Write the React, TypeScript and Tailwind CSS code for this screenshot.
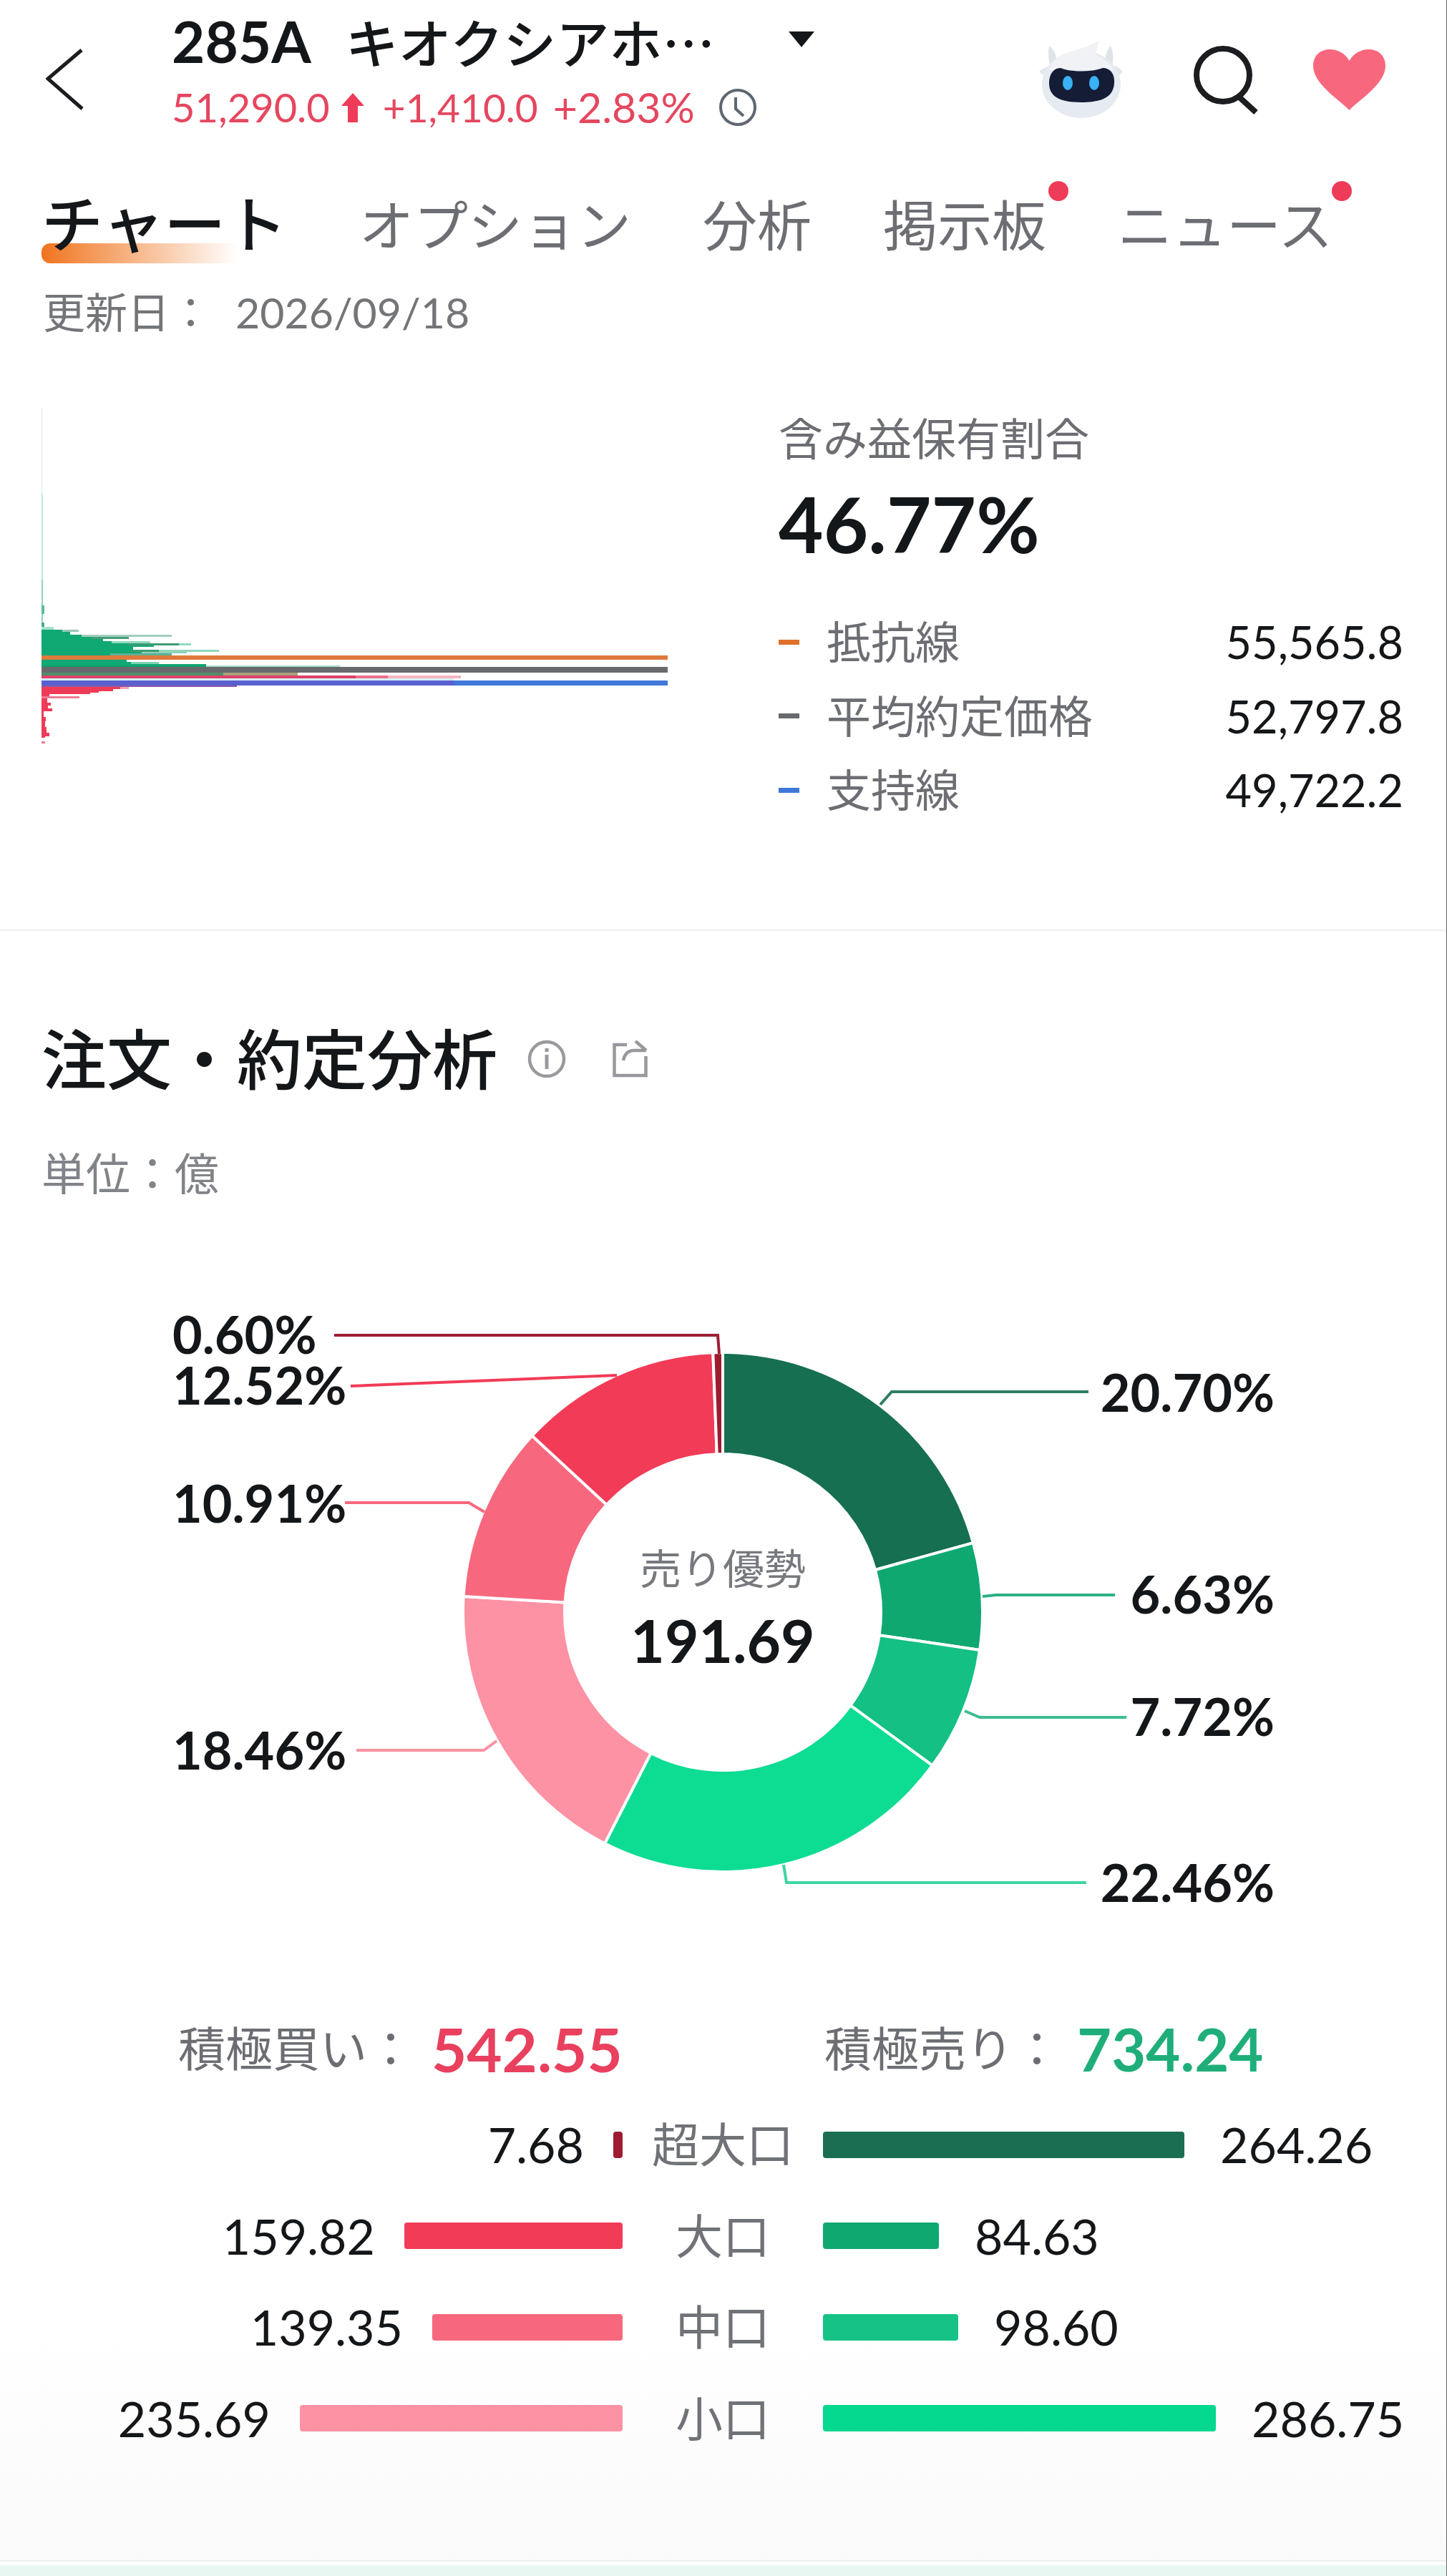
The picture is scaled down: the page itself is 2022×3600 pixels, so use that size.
const GREEN = "#10a873";
const RED = "#ee3b58";

// [y, height, width, fill] painted back to front
const upperBars: [number, number, number, string][] = [
  [0, 120, 1, "#d5f0e6"],
  [120, 120, 2, "#c0e8d9"],
  [240, 60, 2, "#8fd3ba"],
  [276, 12, 4, "#5dbb99"],
  [300, 6, 4, "#4aa98a"],
  [306, 4, 17, "#a5e2cc"],
  [310, 3, 52, "#9cc7b8"],
  [310, 3, 29, GREEN],
  [313, 4, 40, GREEN],
  [317, 3, 182, "#a3cfbf"],
  [317, 3, 56, GREEN],
  [320, 3, 122, "#4a9a7c"],
  [320, 3, 70, GREEN],
  [323, 3, 86, GREEN],
  [326, 3, 152, "#8fdcc0"],
  [326, 3, 98, GREEN],
  [329, 3, 209, "#8fdcc0"],
  [329, 3, 192, "#3d9c78"],
  [329, 3, 120, GREEN],
  [332, 2, 157, GREEN],
  [334, 4, 128, GREEN],
  [338, 3, 248, "#92d6bd"],
  [338, 3, 164, "#3d9c78"],
  [338, 3, 125, GREEN],
  [341, 2, 203, "#8dd0b8"],
  [341, 2, 140, GREEN],
  [343, 3, 182, "#5fb094"],
  [343, 3, 96, GREEN],
  [352, 3, 119, GREEN],
  [355, 3, 164, "#7fd3b4"],
  [355, 3, 125, GREEN],
  [358, 2, 230, GREEN],
  [360, 2, 417, "#a9dcc9"],
  [360, 2, 230, "#0fa06c"],
  [370, 4, 358, "#a7a27c"],
  [370, 4, 254, "#4f8f6a"],
  [374, 4, 586, "#f7b4c2"],
  [374, 4, 484, "#ef6f8c"],
  [374, 4, 439, "#e0406a"],
  [378, 3, 576, "#d6f1f5"],
];

const lowerBars: [number, number, number, string][] = [
  [388, 2, 273, "#8a5aa8"],
  [390, 3, 122, "#f3a7b6"],
  [390, 3, 110, RED],
  [393, 3, 100, RED],
  [396, 2, 80, RED],
  [398, 2, 68, RED],
  [400, 3, 11, RED],
  [403, 3, 53, "#ef7d92"],
  [406, 6, 8, RED],
  [412, 4, 13, RED],
  [416, 4, 9, RED],
  [420, 4, 15, RED],
  [424, 8, 3, RED],
  [432, 6, 6, RED],
  [438, 8, 5, RED],
  [446, 8, 7, RED],
  [454, 5, 11, RED],
  [459, 2, 5, RED],
  [466, 3, 5, "#f07f93"],
];

function VolumeProfile() {
  return (
    <svg width="875" height="485" viewBox="0 0 875 485" className="shrink-0">
      {upperBars.map(([y, h, w, fill], i) => (
        <rect key={i} x="0" y={y} width={w} height={h} fill={fill} />
      ))}
      <rect x="0" y="346" width="875" height="6" fill="#df7a3c" />
      <rect x="0" y="362" width="875" height="8" fill="#68696d" />
      <rect x="0" y="381" width="875" height="7" fill="#3f78d8" />
      <rect x="0" y="381" width="576" height="7" fill="#5a60d0" />
      {lowerBars.map(([y, h, w, fill], i) => (
        <rect key={i} x="0" y={y} width={w} height={h} fill={fill} />
      ))}
    </svg>
  );
}

const segments = [
  { pct: 20.7, fill: "#156f50" },
  { pct: 6.63, fill: "#0fa871" },
  { pct: 7.72, fill: "#14c084" },
  { pct: 22.46, fill: "#0ddc93" },
  { pct: 18.46, fill: "#fd92a4" },
  { pct: 10.91, fill: "#f7687f" },
  { pct: 12.52, fill: "#f23b57" },
  { pct: 0.6, fill: "#9e1c30" },
];

const leaders = [
  { points: "467,1866 1003,1866 1005,1892", stroke: "#9c1f35" },
  { points: "490,1937 862,1922", stroke: "#f23b57" },
  { points: "482,2100 655,2100 677,2113", stroke: "#f7687f" },
  { points: "498,2446 676,2446 694,2433", stroke: "#fb92a3" },
  { points: "1230,1963 1246,1945 1521,1945", stroke: "#2f7d62" },
  { points: "1373,2231 1392,2229 1558,2229", stroke: "#2bb083" },
  { points: "1348,2391 1369,2400 1574,2400", stroke: "#3cbd90" },
  { points: "1095,2606 1099,2631 1518,2631", stroke: "#3ed5a0" },
];

const leftLabels = [
  { text: "0.60%", y: 1892 },
  { text: "12.52%", y: 1963 },
  { text: "10.91%", y: 2128 },
  { text: "18.46%", y: 2473 },
];

const rightLabels = [
  { text: "20.70%", y: 1973 },
  { text: "6.63%", y: 2255 },
  { text: "7.72%", y: 2426 },
  { text: "22.46%", y: 2658 },
];

function arcPath(start: number, end: number) {
  const cx = 1010;
  const cy = 2253;
  const outer = 363;
  const inner = 221;
  const toXY = (r: number, deg: number) => {
    const rad = (deg * Math.PI) / 180;
    return `${cx + r * Math.sin(rad)} ${cy - r * Math.cos(rad)}`;
  };
  const large = end - start > 180 ? 1 : 0;
  return `M${toXY(outer, start)} A${outer} ${outer} 0 ${large} 1 ${toXY(outer, end)} L${toXY(inner, end)} A${inner} ${inner} 0 ${large} 0 ${toXY(inner, start)} Z`;
}

function Donut() {
  let acc = 0;
  return (
    <div className="relative mt-[105px] h-[900px]">
      <svg width="2021" height="900" viewBox="0 1780 2021 900">
        {segments.map((s) => {
          const start = acc;
          acc += s.pct * 3.6;
          return (
            <path
              key={s.fill}
              d={arcPath(start, acc)}
              fill={s.fill}
              stroke="#ffffff"
              strokeWidth="4"
            />
          );
        })}
        {leaders.map((l) => (
          <polyline key={l.points} points={l.points} fill="none" stroke={l.stroke} strokeWidth="4" />
        ))}
        {leftLabels.map((l) => (
          <text key={l.text} x="241" y={l.y} className="fill-[#14171a] text-[72px] font-bold">
            {l.text}
          </text>
        ))}
        {rightLabels.map((l) => (
          <text
            key={l.text}
            x="1781"
            y={l.y}
            textAnchor="end"
            className="fill-[#14171a] text-[72px] font-bold"
          >
            {l.text}
          </text>
        ))}
      </svg>
      <div className="absolute left-[810px] top-[372px] flex w-[400px] flex-col items-center">
        <span className="h-[80px] text-[58px] leading-[80px] text-[#76797e]">売り優勢</span>
        <span className="mt-[10px] h-[100px] text-[82px] font-bold leading-[100px] text-[#14171a]">
          191.69
        </span>
      </div>
    </div>
  );
}

const flowRows = [
  { label: "超大口", buy: "7.68", buyW: "w-[13px]", buyC: "bg-[#9e1c30]", sell: "264.26", sellW: "w-[505px]", sellC: "bg-[#1b6e51]" },
  { label: "大口", buy: "159.82", buyW: "w-[305px]", buyC: "bg-[#f23b57]", sell: "84.63", sellW: "w-[162px]", sellC: "bg-[#0fa871]" },
  { label: "中口", buy: "139.35", buyW: "w-[266px]", buyC: "bg-[#f7687f]", sell: "98.60", sellW: "w-[189px]", sellC: "bg-[#17c286]" },
  { label: "小口", buy: "235.69", buyW: "w-[451px]", buyC: "bg-[#fd92a4]", sell: "286.75", sellW: "w-[549px]", sellC: "bg-[#05d98f]" },
];

const legend = [
  { label: "抵抗線", value: "55,565.8", color: "bg-[#e0702a]" },
  { label: "平均約定価格", value: "52,797.8", color: "bg-[#68696d]" },
  { label: "支持線", value: "49,722.2", color: "bg-[#3f78d8]" },
];

function Robot() {
  return (
    <svg width="150" height="130" viewBox="0 0 150 130" className="-my-[18px] -mx-[17px] shrink-0">
      <path d="M28 24 C36 30 40 40 38 52 L30 54 C27 44 26 32 28 24Z" fill="#dfe4ea" />
      <path d="M114 24 C118 32 118 44 116 54 L106 50 C106 40 108 30 114 24Z" fill="#dfe4ea" />
      <path d="M14 60 C22 54 30 50 40 50 L30 70 C24 68 18 64 14 60Z" fill="#e3e7ec" />
      <path d="M131 60 C124 52 116 50 106 50 L118 70 C124 68 128 64 131 60Z" fill="#e3e7ec" />
      <ellipse cx="73" cy="78" rx="55" ry="47" fill="#e6ebf1" />
      <path d="M44 38 C58 30 80 28 97 17 C96 26 94 32 92 36 C106 42 114 50 118 58 L28 58 C30 50 36 42 44 38Z" fill="#f0f2f5" />
      <path d="M44 55 C58 61 88 61 103 55 C114 55 120 64 119 76 C118 92 108 103 73 103 C38 103 28 92 28 76 C28 64 34 55 44 55Z" fill="#141c36" />
      <ellipse cx="54" cy="76" rx="7" ry="10" fill="#3ab0f5" />
      <ellipse cx="91" cy="76" rx="7" ry="10" fill="#3ab0f5" />
    </svg>
  );
}

export default function App() {
  return (
    <div className="flex h-[3600px] w-[2022px] flex-col overflow-hidden border-r border-[#666] bg-[linear-gradient(to_bottom,#ffffff_0,#ffffff_3250px,#fafafa_3578px)] font-['Lato','Noto_Sans_CJK_JP',sans-serif] text-[#14171a]">
      {/* top bar */}
      <div className="flex h-[200px] items-start pl-[64px] pr-[85px]">
        <svg width="54" height="86" viewBox="0 0 54 86" className="mt-[68px] shrink-0">
          <polyline points="50,2 3,42 51,84" fill="none" stroke="#1b1d20" strokeWidth="5" />
        </svg>
        <div className="ml-[122px] flex flex-col">
          <div className="mt-[17px] flex h-[80px] items-center">
            <span className="text-[80px] font-bold leading-[80px]">285A</span>
            <span className="ml-[48px] font-['Noto_Sans_CJK_JP',sans-serif] text-[74px] font-medium leading-[80px]">
              キオクシアホ…
            </span>
            <svg width="36" height="22" viewBox="0 0 36 22" className="ml-[103px] -translate-y-[2px]">
              <polygon points="0,0 36,0 18,22" fill="#14171a" />
            </svg>
          </div>
          <div className="mt-[18px] flex h-[70px] items-center text-[56px] leading-[70px] text-[#e5475f]">
            <span>51,290.0</span>
            <svg width="32" height="41" viewBox="0 0 32 41" className="ml-[16px]">
              <polygon points="16,0 32,18 23,18 23,41 9,41 9,18 0,18" fill="#ef3b57" />
            </svg>
            <span className="ml-[26px] text-[55px]">+1,410.0</span>
            <span className="ml-[21px] text-[59px]">+2.83%</span>
            <svg width="54" height="54" viewBox="0 0 54 54" className="ml-[33px]">
              <circle cx="27" cy="27" r="24" fill="none" stroke="#5f6770" strokeWidth="4" />
              <polyline points="24,13 24,29 35,39" fill="none" stroke="#5f6770" strokeWidth="4" />
            </svg>
          </div>
        </div>
        <div className="ml-auto mt-[58px] flex items-start">
          <Robot />
          <svg width="90" height="96" viewBox="0 0 90 96" className="ml-[97px] mt-[6px]">
            <ellipse cx="41" cy="41" rx="37" ry="37" fill="none" stroke="#1b1d20" strokeWidth="8" />
            <line x1="64" y1="72" x2="87" y2="93" stroke="#1b1d20" strokeWidth="8" />
          </svg>
          <svg width="101" height="85" viewBox="0 0 101 85" className="ml-[77px] mt-[11px]">
            <path
              d="M50.5 85 C36 70 0 48 0 23 C0 9 10 0 23 0 C35 0 45 6 50.5 16 C56 6 66 0 78 0 C91 0 101 9 101 23 C101 48 65 70 50.5 85Z"
              fill="#f7687f"
            />
          </svg>
        </div>
      </div>

      {/* tabs */}
      <div className="mt-[70px] flex h-[90px] items-center gap-[100px] pl-[58px] text-[76px] leading-[90px] text-[#6c6e73]">
        <div className="relative w-[344px] font-medium">
          <div className="absolute left-[0px] top-[72px] h-[28px] w-[274px] rounded-l-[12px] bg-gradient-to-r from-[#f0751f] to-transparent" />
          <span className="relative text-[86px] text-[#14171a]">チャート</span>
        </div>
        <span>オプション</span>
        <span>分析</span>
        <div className="relative">
          <span>掲示板</span>
          <div className="absolute left-[231px] top-[-17px] h-[28px] w-[28px] rounded-full bg-[#ee3b58]" />
        </div>
        <div className="relative">
          <span>ニュース</span>
          <div className="absolute left-[299px] top-[-17px] h-[28px] w-[28px] rounded-full bg-[#ee3b58]" />
        </div>
      </div>

      <div className="mt-[42px] flex h-[70px] items-center pl-[60px] text-[59px] leading-[70px] text-[#737579]">
        <span>更新日：</span>
        <span className="ml-[33px]">2026/09/18</span>
      </div>

      {/* cost distribution */}
      <div className="mt-[98px] flex h-[729px] pl-[58px] pr-[60px]">
        <VolumeProfile />
        <div className="ml-[155px] flex flex-1 flex-col">
          <span className="mt-[8px] h-[70px] text-[62px] leading-[70px] text-[#6c6e73]">含み益保有割合</span>
          <span className="mt-[23px] h-[120px] text-[108px] font-bold leading-[120px]">46.77%</span>
          <div className="mt-[71px] flex flex-col gap-[33.5px]">
            {legend.map((row) => (
              <div key={row.label} className="flex h-[70px] items-center">
                <div className={`h-[7px] w-[29px] ${row.color}`} />
                <span className="ml-[38px] text-[62px] leading-[70px] text-[#6c6e73]">{row.label}</span>
                <span className="ml-auto text-[63px] leading-[70px]">{row.value}</span>
              </div>
            ))}
          </div>
        </div>
      </div>

      <div className="h-[2px] bg-[#f0f0f0]" />

      {/* order flow */}
      <div className="mt-[129px] flex h-[100px] items-center pl-[58px]">
        <span className="text-[91px] font-medium leading-[100px]">注文・約定分析</span>
        <svg width="54" height="54" viewBox="0 0 54 54" className="ml-[42px]">
          <circle cx="27" cy="27" r="24" fill="none" stroke="#98999d" strokeWidth="4.5" />
          <rect x="24.5" y="12" width="5" height="5" fill="#98999d" />
          <rect x="24.5" y="21" width="5" height="20" fill="#98999d" />
        </svg>
        <svg width="50" height="52" viewBox="0 0 50 52" className="ml-[65px]">
          <path
            d="M20 6 H2.5 V49 H46.5 V22 M15 28 C17 18 22 14 30 14 H47 M32 1 L47 14"
            fill="none"
            stroke="#98999d"
            strokeWidth="4.5"
          />
        </svg>
      </div>

      <div className="mt-[75px] h-[70px] pl-[58px] text-[62px] leading-[70px] text-[#808388]">単位：億</div>

      <Donut />

      <div className="mt-[138px] flex h-[90px] items-center text-[66px] leading-[90px]">
        <div className="ml-[249px] flex w-[903px] items-center">
          <span className="text-[#6c6e73]">積極買い：</span>
          <span className="ml-[24px] text-[85px] font-bold text-[#e8405e]">542.55</span>
        </div>
        <div className="flex items-center">
          <span className="text-[#6c6e73]">積極売り：</span>
          <span className="ml-[23px] text-[83px] font-bold text-[#1fae7a]">734.24</span>
        </div>
      </div>

      <div className="mt-[54px] flex flex-col gap-[57.5px]">
        {flowRows.map((row) => (
          <div key={row.label} className="flex h-[70px] items-center">
            <div className="flex w-[870px] items-center justify-end gap-[41px]">
              <span className="text-[68px] leading-[70px]">{row.buy}</span>
              <div className={`h-[37px] rounded-[4px] ${row.buyW} ${row.buyC}`} />
            </div>
            <span className="w-[280px] text-center text-[66px] leading-[70px] text-[#6f7277]">{row.label}</span>
            <div className="flex items-center gap-[50px]">
              <div className={`h-[37px] rounded-[4px] ${row.sellW} ${row.sellC}`} />
              <span className="text-[68px] leading-[70px]">{row.sell}</span>
            </div>
          </div>
        ))}
      </div>

      <div className="mt-auto h-[22px] border-t-2 border-[#eeeeee] bg-[linear-gradient(to_bottom,#ffffff_0,#ffffff_3px,#e8f7f2_6px)]" />
    </div>
  );
}
